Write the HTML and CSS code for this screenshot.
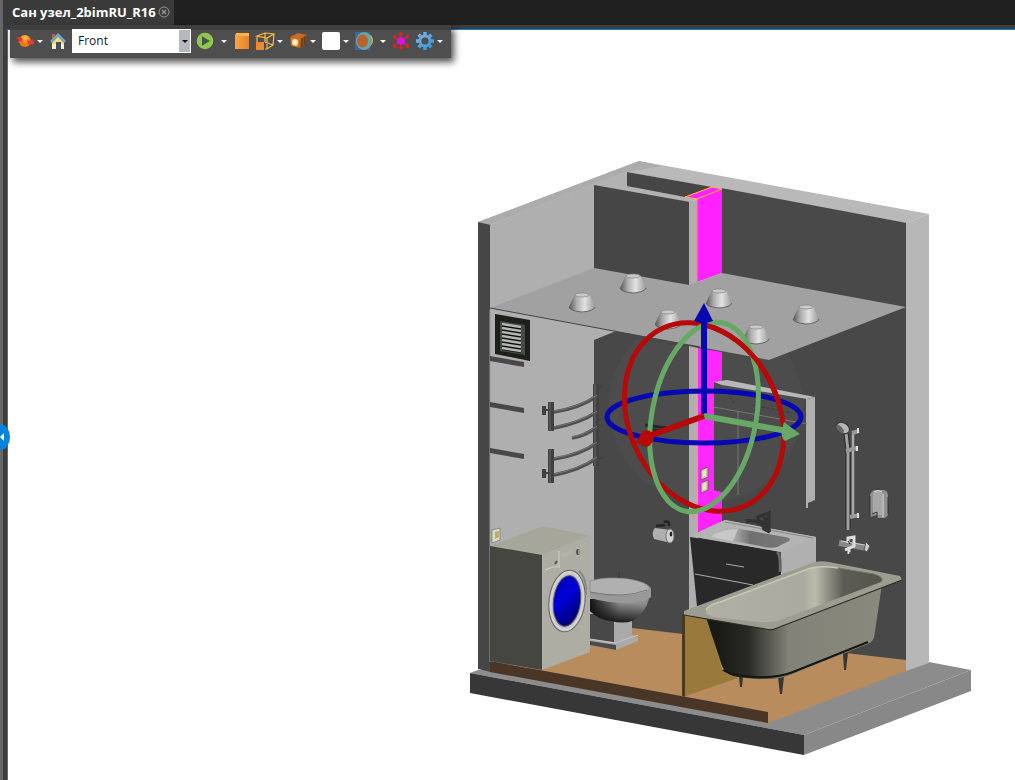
FILE: index.html
```html
<!DOCTYPE html>
<html lang="ru">
<head>
<meta charset="utf-8">
<title>Сан узел_2bimRU_R16</title>
<link rel="stylesheet" href="styles.css">
</head>
<body class="app">
<div class="rail"><button class="expand" aria-label="Expand panel"><svg viewBox="0 0 10 26" width="10" height="26"><path d="M0 0A10 13 0 0 1 0 26Z" fill="#0783de"/><path d="M0 13l4-4v8z" fill="#fff"/></svg></button></div>
<main class="workspace">
<header class="tabs">
  <div class="tab"><span class="tab-title">Сан узел_2bimRU_R16</span><button class="close" aria-label="Close"><svg width="12" height="12" viewBox="0 0 12 12" fill="none" stroke="#969696"><circle cx="6" cy="6" r="5"/><path d="M4 4l4 4M8 4l-4 4" stroke-width="1.4"/></svg></button></div>
</header>
<section class="viewport">
<div class="toolbar" role="toolbar" aria-label="View">
  <div class="group"><button class="tool" aria-label="Orbit"><svg viewBox="0 0 20 20"><defs><radialGradient id="orb" cx=".5" cy=".25"><stop stop-color="#ffc34a"/><stop offset="1" stop-color="#e57b0c"/></radialGradient></defs><circle cx="10" cy="10" r="6" fill="url(#orb)"/><path d="M1 7l4-1 2 1 1 5-2-2-4 2 2-3zM19 13l-4 1-2-1-1-5 2 2 4-2 1 3z" fill="#f2333a"/></svg></button><button class="caret" aria-label="Orbit options"></button></div>
  <button class="tool" aria-label="Home"><svg viewBox="0 0 20 20"><path d="M4 3h3v5H4z" fill="#b7594d"/><path d="M4 9l6-6 6 6v9H4z" fill="#fbd967"/><path d="M4 13h12v5H4z" fill="#fff0b8"/><path d="M2 10l8-8 8 8-2 2-6-6-6 6z" fill="#6fa6c6"/><path d="M8 11h5v7H8z" fill="#434f64"/></svg></button>
  <span class="picker"><select class="view-select" aria-label="View name"><option>Front</option><option>Top</option><option>Left</option></select></span>
  <div class="group spaced"><button class="tool" aria-label="Play"><svg viewBox="0 0 20 20"><circle cx="10" cy="10" r="8.3" fill="#8fc74f"/><path d="M7 5.2l8 4.8-8 4.8z" fill="#4d514b"/></svg></button><button class="caret" aria-label="Play options"></button></div>
  <button class="tool narrow" aria-label="Shaded"><svg viewBox="0 0 20 20"><defs><linearGradient id="box"><stop stop-color="#ffa044"/><stop offset="1" stop-color="#df862b"/></linearGradient></defs><path d="M3 5h14v13H3z" fill="url(#box)"/><path d="M3 5l1-3h13v3z" fill="#ffb63d"/></svg></button>
  <div class="group"><button class="tool" aria-label="Projection"><svg viewBox="0 0 20 20" fill="none" stroke="#f8bd46" stroke-width="1.2"><path d="M2 5l8-3 9 1-7 4zM2 5v6M12 7v11M10 18h2l6-4 1-11M10 2v9M10 11l8 3"/><path d="M1 11h8v8H1z" fill="#eb8935" stroke="none"/></svg></button><button class="caret" aria-label="Projection options"></button></div>
  <div class="group"><button class="tool" aria-label="Section box"><svg viewBox="0 0 20 20"><defs><radialGradient id="glow"><stop offset=".15" stop-color="#fff"/><stop offset=".6" stop-color="#ffdd8b"/><stop offset="1" stop-color="#d78124"/></radialGradient></defs><path d="M2 6l8-4 9 2-5 5z" fill="#c66d26"/><path d="M12 8l7-4-1 9-6 5z" fill="#915018"/><path d="M2 6l11 2-1 9-9-2z" fill="#b86624"/><path d="M3 7l8 1-1 8-6-2z" fill="url(#glow)"/><path d="M14 7v9M17 5v9" stroke="#4a342a"/></svg></button><button class="caret" aria-label="Section options"></button></div>
  <div class="group"><button class="tool" aria-label="Background"><svg viewBox="0 0 20 20"><rect x="1" y="1" width="18" height="18" rx="2" fill="#fff"/></svg></button><button class="caret" aria-label="Background options"></button></div>
  <div class="group spaced"><button class="tool" aria-label="Materials"><svg viewBox="0 0 20 20"><circle cx="12" cy="9.5" r="7" fill="#efb13b"/><path d="M1 1h15v18H1z" fill="#2f6fa6"/><ellipse cx="10" cy="10" rx="8" ry="9" fill="#6da5a4"/><ellipse cx="8.5" cy="10" rx="5.5" ry="6.5" fill="#b7632c"/></svg></button><button class="caret" aria-label="Materials options"></button></div>
  <button class="tool" aria-label="Explode"><svg viewBox="0 0 20 20"><path d="M10 10V3M10 10v8M10 10L3 6M10 10l7-4M10 10l-7 5M10 10l7 5" stroke="#f02222" stroke-width="1.3"/><path d="M7 4l3-3 3 3zM7 16h6l-3 3zM2 4l4 1-3 3zM18 4l-4 1 3 3zM2 17l4-1-3-4zM18 17l-4-1 3-4z" fill="#f51d20"/><path d="M6 8l4-2 4 2v4l-4 2-4-2z" fill="#dc11e6"/></svg></button>
  <div class="group"><button class="tool" aria-label="Settings"><svg viewBox="0 0 20 20"><defs><linearGradient id="steel" gradientUnits="userSpaceOnUse" x1="2" y1="2" x2="18" y2="18"><stop stop-color="#7fb8e3"/><stop offset="1" stop-color="#2e93e2"/></linearGradient></defs><path d="M3.600 3.600l12.800 12.800M16.400 3.600L3.600 16.400" stroke="url(#steel)" stroke-width="3.400"/><path d="M8.3 1h3.4v18H8.3zM1 8.300h18v3.4H1z" fill="url(#steel)"/><circle cx="10" cy="10" r="6.4" fill="url(#steel)"/><circle cx="10" cy="10" r="3.600" fill="#4e4e4e"/></svg></button><button class="caret" aria-label="Settings options"></button></div>
</div>
<svg class="scene" viewBox="8 30 1007 750" preserveAspectRatio="xMidYMid meet" role="img" aria-label="Bathroom model">
<defs>
<linearGradient id="lamp"><stop stop-color="#555"/><stop offset=".28" stop-color="#aaa"/><stop offset=".6" stop-color="#e2e2e2"/><stop offset="1" stop-color="#9a9a9a"/></linearGradient>
<g id="light"><path d="M-13 11Q-12 15 0 16 12 15 13 11L7-2Q0-4-7-2Z" fill="url(#lamp)"/><path d="M-13 11Q-12 15 0 16 12 15 13 11" fill="none" stroke="#555" stroke-width=".8"/><ellipse cy="-1" rx="7" ry="2" fill="#c9c9c9" stroke="#777" stroke-width=".6"/></g>
<linearGradient id="tub"><stop offset=".06" stop-color="#181914"/><stop offset=".24" stop-color="#292a25"/><stop offset=".47" stop-color="#828278"/><stop offset="1" stop-color="#89897e"/></linearGradient>
<linearGradient id="tubIn"><stop stop-color="#b0b0a6"/><stop offset=".55" stop-color="#aaaaa0"/><stop offset=".62" stop-color="#bbbbad"/><stop offset=".78" stop-color="#5c5c54"/><stop offset="1" stop-color="#55554e"/></linearGradient>
<linearGradient id="bowl" x1=".6" y1="0" x2=".4" y2="1"><stop offset=".15" stop-color="#8e8e8e"/><stop offset=".55" stop-color="#555"/><stop offset="1" stop-color="#161616"/></linearGradient>
<linearGradient id="bowlSide"><stop stop-color="#111"/><stop offset=".5" stop-color="#111" stop-opacity="0"/></linearGradient>
<linearGradient id="basin"><stop offset=".3" stop-color="#aaa"/><stop offset=".5" stop-color="#707070"/><stop offset="1" stop-color="#777"/></linearGradient>
<linearGradient id="drum" x2=".6" y2="1"><stop stop-color="#0000b0"/><stop offset=".5" stop-color="#0000d8"/><stop offset="1" stop-color="#000075"/></linearGradient>
<clipPath id="upperRight"><path d="M704 300H800V400H704Z"/></clipPath>
</defs>
<g class="shell">
<path d="M470 673L478 670 768 660 929 662 971 670 804 735Z" fill="#8c8c8c"/><path d="M470 673L804 735V755L470 693Z" fill="#373737"/><path d="M804 735L971 670V691L804 755Z" fill="#888"/>
<path d="M478 222L639 161 929 214 906 223 627 172 594 184 490 225Z" fill="#b9b9b9"/>
<path d="M478 222L639 161 662 166 627 172 594 184 490 225Z" fill="#acacac"/>
<path d="M478 222L491 225V672L478 669Z" fill="#464646"/>
<path d="M490 225L596 183V320L618 325V342L596 350V640L490 672Z" fill="#afafaf"/>
<path d="M594 183L627 172V184L698 198 689 203 594 186Z" fill="#b2b2b2"/>
<path d="M627 172L712 187 685 197 627 186Z" fill="#464646"/>
<path d="M594 185L690 202V286L594 269Z" fill="#464646"/><path d="M689 202L698 199V283L689 286Z" fill="#aeaeae"/>
<path d="M721 188L907 223V308L721 274Z" fill="#494949"/>
<path d="M594 340L616 331 769 358 907 305V665L594 625Z" fill="#484848"/>
<path d="M906 223L929 214V663L906 671Z" fill="#b7b7b7"/>
<path d="M490 308L594 268 689 285 722 273 906 307 769 360Z" fill="#a1a1a1"/><path d="M490 308L700 347" stroke="#444"/>
<path d="M685 197L712 187 722 189V273L697 282V199Z" fill="#f2f"/><path d="M697 199V282" stroke="#ef8e80"/><path d="M685 197L712 187 722 189 697 199Z" fill="none" stroke="#fb3"/>
<path d="M490 661L594 621 632 628 906 660V671L768 723V712Z" fill="#b98c5d"/><path d="M490 661L768 712V723L490 672Z" fill="#4a3626"/>
<path d="M490 310V662" stroke="#999"/>
<path d="M689 346L698 348V610H689Z" fill="#aeaeae"/><path d="M698 348L722 352V382H714V490L722 492V524L698 532Z" fill="#f2f"/><path d="M697 348V530" stroke="#e39b87"/>
</g>
<g class="lights"><use href="#light" x="582" y="296"/><use href="#light" x="633" y="277"/><use href="#light" x="719" y="292"/><use href="#light" x="668" y="313"/><use href="#light" x="756" y="328"/><use href="#light" x="806" y="308"/></g>
<g class="grille"><path d="M495 314L530 320V361L495 354Z" fill="#1c1f1a"/><path d="M500 321L525 325V355L500 351Z" fill="#454b44"/><path d="M502 323L521 326V353L502 350Z" fill="#111"/><path d="M502 324l19 3m-19 1l19 3m-19 1l19 3m-19 1l19 3m-19 1l19 3m-19 1l19 3m-19 1l19 3" stroke="#b5b5b5" stroke-width="2.4"/></g>
<path d="M490 356l34 6v5l-34-6zM490 402l34 6v5l-34-6zM490 448l34 6v5l-34-6z" fill="#484848"/>
<g class="rail-heater" fill="none" stroke="#404040"><path d="M551 402v29M551 449v34M596 384v82" stroke-width="6"/><path d="M550 402v29M550 449v34M595 384v82" stroke="#696969" stroke-width="1"/><path d="M554 412Q580 408 597 396M554 428Q580 423 597 412M572 438Q585 436 597 427M554 459Q580 455 597 443M554 475Q580 470 597 458" stroke="#505050" stroke-width="3.5"/><path d="M554 411Q580 407 597 395M554 427Q580 422 597 411M572 437Q585 435 597 426M554 458Q580 454 597 442M554 474Q580 469 597 457" stroke="#777"/><path d="M543 410h7M543 473h7M598 388l5-2M598 459l5-2" stroke-width="2"/><path d="M544 406v9M544 469v9" stroke-width="4"/></g>
<g class="washer"><path d="M490 546L543 526 590 536 542 555Z" fill="#a6a69a"/><path d="M490 546L542 555V670L490 661Z" fill="#454640"/><path d="M542 555L590 535V652L542 670Z" fill="#adada3"/><path d="M559 551V568M545 570Q554 566 558 567" fill="none" stroke="#d0d0c6"/><path d="M561 554L572 549V554L561 558Z" fill="#b3b3ae"/><ellipse cx="578" cy="552" rx="2" ry="3" fill="#555"/><path d="M579 550v4" stroke="#ccc"/><path d="M555 564l2-3" stroke="#555" stroke-width="2"/><ellipse cx="567" cy="601" rx="18" ry="31" transform="rotate(7 567 601)" fill="#c4c4c4" stroke="#666"/><ellipse cx="567" cy="601" rx="16" ry="29" transform="rotate(7 567 601)" fill="none" stroke="#d6d6d6" stroke-width="1.5"/><path d="M579 571Q587 578 586 595" fill="none" stroke="#888" stroke-width="2"/><ellipse cx="567" cy="601" rx="13.5" ry="25.5" transform="rotate(7 567 601)" fill="url(#drum)" stroke="#555"/></g>
<g class="outlets"><path d="M492 530l8-2v12l-8 3z" fill="#d9d9c8" stroke="#77776c" stroke-width=".7"/><path d="M495 532l4-1v6l-4 2z" fill="#b9ad67"/><path d="M701 470l7-3v10l-7 3zM701 483l7-3v10l-7 3z" fill="#d0cba0" stroke="#555" stroke-width=".8"/><path d="M703 471l3-1v6l-3 1zM703 484l3-1v6l-3 1z" fill="#eae7c3"/></g>
<g class="toilet"><path d="M590 639L614 642V621H632V635L638 637V641L616 650 590 645Z" fill="#aaa"/><path d="M590 614H614V642L590 639Z" fill="#484848"/><path d="M590 641L616 645V650L590 645Z" fill="#4b4b4b"/><path d="M590 639L615 643 638 635" fill="none" stroke="#c6c6c6"/><path d="M590 599H649Q645 614 632 621 624 624 611 621 599 620 590 611Z" fill="url(#bowl)"/><path d="M590 599H649Q645 614 632 621 624 624 611 621 599 620 590 611Z" fill="url(#bowlSide)"/><path d="M590 581Q607 576 628 579 650 583 651 589V597Q646 602 627 603 607 603 590 598Z" fill="#999"/><path d="M590 581Q607 576 628 579 648 582 650 589 642 596 622 596 600 596 590 592Z" fill="#b0b0b0" stroke="#888" stroke-width=".7"/><path d="M590 592Q624 599 647 590" fill="none" stroke="#777"/><path d="M619 572v6" stroke="#333"/></g>
<g class="paper"><path d="M656 526l9-1M664 522q6-2 5 4" fill="none" stroke="#222" stroke-width="2.5"/><path d="M655 528L671 530V543L654 539Q651 532 655 528Z" fill="#b0b0b0"/><ellipse cx="670" cy="536" rx="4" ry="7" fill="#d0d0d0" stroke="#777"/><ellipse cx="671" cy="534" rx="1.3" ry="2.5" fill="#222"/></g>
<g class="cabinet"><path d="M714 382L807 399V507L714 490Z" fill="#484848"/><path d="M714 382L727 380 815 397 807 399 722 385Z" fill="#b7b7b7"/><path d="M807 399L815 397V500L808 503V508H806V399Z" fill="#afafaf"/><path d="M714 407L807 424M738 411V495" stroke="#747474"/><path d="M731 397q0 7 5 5M752 405l40 8" fill="none" stroke="#333" stroke-dasharray="3 2"/></g>
<g class="vanity"><path d="M690 536L725 520 816 537V572L781 585V552Z" fill="#b0b0b0"/><path d="M690 537L776 551Q781 552 781 560V590L700 610 697 606Z" fill="#292929"/><path d="M777 552q4 3 3 20" stroke="#666" stroke-width="3" fill="none"/><path d="M690 536L725 520 816 537 781 552Z" fill="#b4b4b4"/><path d="M711 537Q720 530 734 528L785 537Q792 538 789 541L777 547Q771 549 760 546Z" fill="url(#basin)"/><path d="M711 537L733 541 738 529Q720 529 711 537Z" fill="#c8c8c8"/><path d="M725 522L813 538" stroke="#888"/><path d="M695 574L753 585M726 564l18 3" stroke="#aaa"/><path d="M769 532V513L758 517V521L764 523V529L770 532M766 530Q759 519 746 521" fill="none" stroke="#333" stroke-width="3.5"/><path d="M763 517h6v12l-5-1z" fill="#333"/></g>
<g class="shower" fill="none"><path d="M853 433V515" stroke="#aaa" stroke-width="2.5"/><path d="M846 433l2 17V530" stroke="#292929" stroke-width="5"/><path d="M846 433l2 17V530" stroke="#a0a0a0" stroke-width="3"/><ellipse cx="843" cy="428" rx="7" ry="5" transform="rotate(35 843 428)" fill="#b5b5b5" stroke="#333"/><ellipse cx="840" cy="429" rx="2.5" ry="5" transform="rotate(-40 840 429)" fill="#666"/><path d="M852 433l7-2M846 451l11-3M850 517l9-2" stroke="#999" stroke-width="4"/><path d="M858 428v5M857 446v5M858 513v5" stroke="#ddd" stroke-width="2"/></g>
<g class="tap"><path d="M839 543L867 548" stroke="#888" stroke-width="6"/><path d="M841 541l24 4" stroke="#ccc"/><path d="M866 542l4 4-3 6-3-2z" fill="#ccc" stroke="#555"/><path d="M848 543v-5l6-1v9l-9 4M849 547v7" fill="none" stroke="#ddd" stroke-width="3"/><path d="M848 541l2 3M850 552v3" stroke="#222"/></g>
<g class="dispenser"><path d="M870 517V495Q871 491 875 490L884 490Q888 491 888 496V515L885 518 877 518V515Z" fill="#909090"/><path d="M873 493q5-4 9 0v22h-5l-4-3z" fill="#a8a8a8"/><path d="M883 494v23M874 492q4-3 8 0" fill="none" stroke="#ddd"/><path d="M870 517V496M872 514l5-2v6M888 497v17" fill="none" stroke="#333"/></g>
<g class="bath"><path d="M683 614L707 619 722 669 738 678 683 697Z" fill="#9a7a3c"/><path d="M682 614h3v83l-3-1z" fill="#4b391d"/><path d="M739 676h4l-1 11h-2zM778 677h6l-2 17h-2zM843 653h5l-2 17h-2z" fill="#363733"/><path d="M706 617H768L882 584 874 638Q872 643 865 645L793 674Q782 679 768 679 746 679 733 676 723 672 721 663Z" fill="url(#tub)"/><path d="M723 670Q732 676 754 677 779 678 793 672L868 642" fill="none" stroke="#151713" stroke-width="2"/><path d="M684 611L812 563Q819 560 829 562L900 576 902 580 777 628Q772 631 765 629L684 615Z" fill="#9c9c90"/><path d="M684 615L765 629Q772 631 777 628L902 580" fill="none" stroke="#2c2d28" stroke-width="1.2"/><path d="M706 611Q708 605 720 602L808 569Q819 565 838 568L874 574Q885 577 881 582L783 619Q776 623 758 622L714 617Q705 615 706 611Z" fill="url(#tubIn)"/><path d="M706 610Q708 605 720 602L808 569Q819 565 838 568" fill="none" stroke="#c8c8b9" stroke-width="1.5"/><path d="M838 568L874 574Q885 577 881 582" fill="none" stroke="#777769"/></g>
<g class="gizmo" fill="none"><path d="M636 339L769 360 787 353A97 97 0 1 1 636 339Z" fill="#fff" opacity=".025"/><path d="M645 425l22 3M650 430l17 1" stroke="#272727" stroke-width="3"/><ellipse cx="704" cy="417" rx="97" ry="26" stroke="#0808b3" stroke-width="5"/><ellipse cx="704" cy="417" rx="98" ry="75" transform="rotate(65 704 417)" stroke="#b80808" stroke-width="5"/><ellipse cx="704" cy="417" rx="96" ry="52" transform="rotate(101 704 417)" stroke="#67a867" stroke-width="5"/><g clip-path="url(#upperRight)"><ellipse cx="704" cy="417" rx="98" ry="75" transform="rotate(65 704 417)" stroke="#b80808" stroke-width="5"/></g><path d="M704 319V414" stroke="#0808b3" stroke-width="6"/><path d="M704 303L713 321Q703 325 694 321Z" fill="#0808b3"/><path d="M704 416L787 431" stroke="#67a867" stroke-width="6"/><path d="M784 422L800 434 785 441Q779 437 784 422Z" fill="#67a867"/><path d="M704 416L649 436" stroke="#b80808" stroke-width="6"/><path d="M636 442L643 431Q652 428 654 438 651 447 645 447Z" fill="#b80808"/></g>
</svg>
</section>
</main>
</body>
</html>
```
FILE: styles.css
```css
* { box-sizing: border-box; }
button { padding: 0; border: 0; background: none; display: flex; align-items: center; justify-content: center; cursor: pointer; }
.app { margin: 0; min-height: 100vh; display: flex; background: #202020; font: 12px/16px "Open Sans", "Noto Sans", sans-serif; }
.rail { position: relative; flex: 0 0 7px; background: linear-gradient(90deg, #666 3px, #3e3e3e 3px); }
.expand { position: absolute; z-index: 3; left: 0; top: 56%; transform: translateY(-50%); }
.workspace { flex: 1; min-width: 0; display: flex; flex-direction: column; }
.tabs { display: flex; height: 29px; margin-left: -4px; z-index: 1; border-bottom: 4px solid #3c3c3c; background: #202020; }
.tab { display: flex; align-items: center; gap: 2px; padding: 0 4px 2px 9px; background: #3a3a3a; color: #fff; font-size: 13px; font-weight: 700; }
.viewport { position: relative; flex: 1; min-height: 0; display: flex; border-top: 1px solid #0783de; border-left: 1px solid #0783de; background: #fff; }
.scene { display: block; width: 100%; height: calc(100vh - 30px); }
.toolbar { position: absolute; z-index: 2; left: 2px; top: -5px; display: flex; align-items: center; gap: 4px; height: 33px; padding: 0 7px 1px 5px; background: linear-gradient(#3f3f3f 5px, #4e4e4e 5px); box-shadow: 3px 4px 7px rgba(0, 0, 0, .7); }
.group { display: flex; }
.spaced { gap: 4px; }
.tool { width: 20px; height: 20px; }
.tool svg { flex: none; width: 20px; height: 20px; }
.narrow { width: 19px; }
.caret { width: 9px; height: 20px; }
.caret::before, .picker::after { content: ""; border: 3px solid transparent; border-top-color: #fff; border-bottom: 0; }
.picker { position: relative; display: flex; }
.picker::after { position: absolute; right: 3px; top: 11px; border-top-color: #111; pointer-events: none; }
.view-select { appearance: none; width: 119px; height: 24px; margin: 0; padding: 0 14px 0 5px; border: 1px solid #fff; border-radius: 0; background: linear-gradient(90deg, #fff calc(100% - 11px), #b4b9bd calc(100% - 11px)); color: #1a1a2a; font: inherit; }
```
